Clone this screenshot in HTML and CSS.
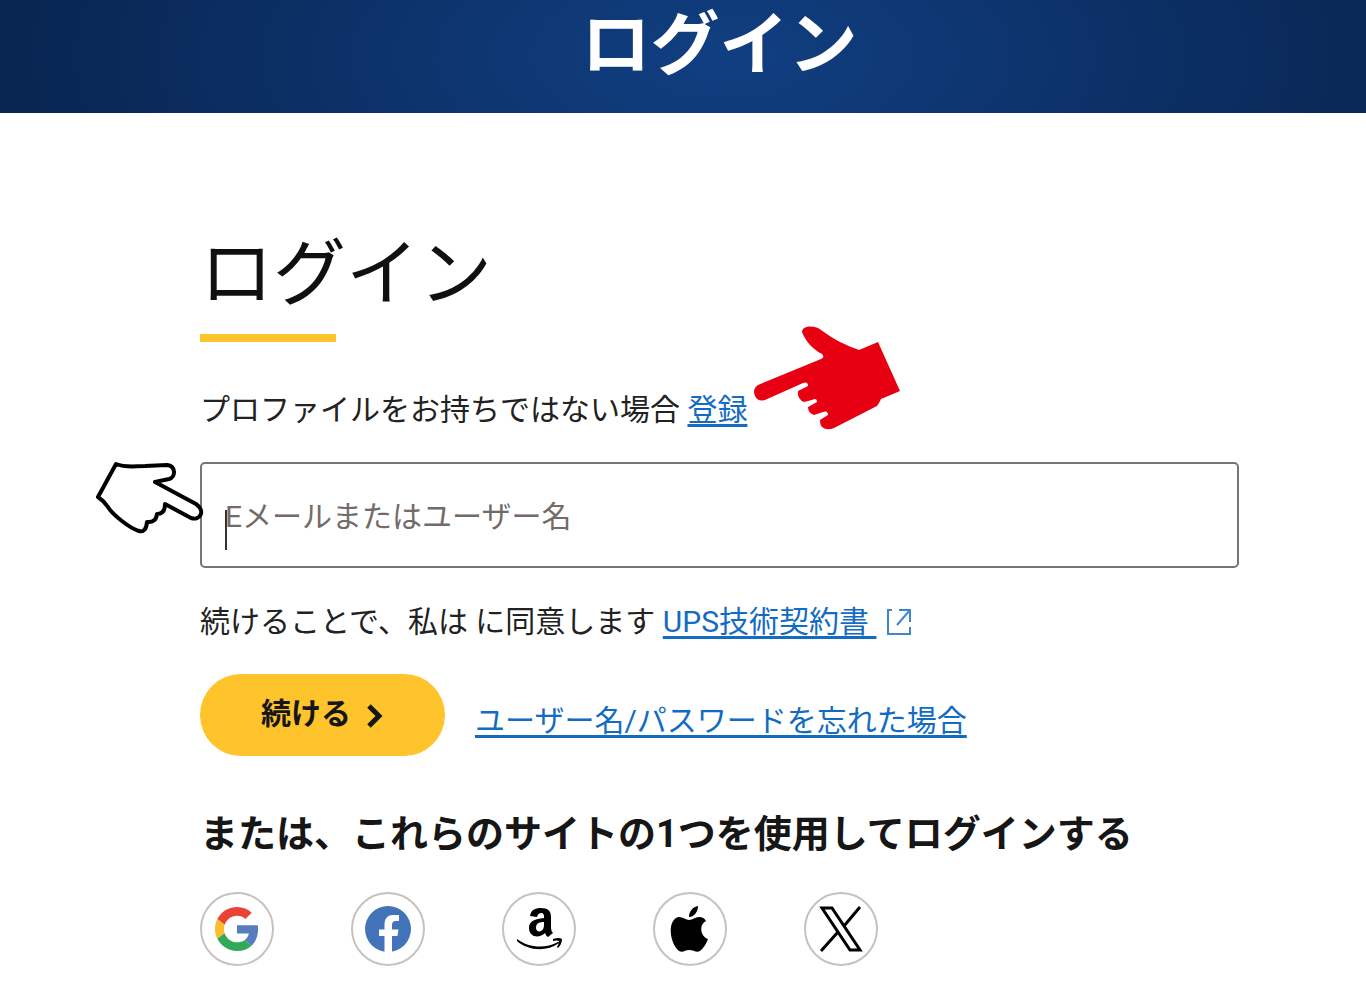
FILE: index.html
```html
<!DOCTYPE html>
<html lang="ja">
<head>
<meta charset="utf-8">
<meta name="viewport" content="width=device-width, initial-scale=1">
<title>ログイン</title>
<link rel="stylesheet" href="styles.css">
</head>
<body>
<header class="banner"><p class="banner-title">ログイン</p></header>
<main class="login">
  <h1 class="title">ログイン</h1>
  <p class="signup">プロファイルをお持ちではない場合 <span class="signup-anchor"><a href="#register">登録</a>
    <svg class="hand-red" width="146" height="104" viewBox="0 0 146 104" aria-hidden="true"><path fill="#e70012" d="M4 59L67 33Q71 31 68 28C58 23 51 14 48 6C48-1 62-1 67 4C81 14 91 19 105 24L124 16L146 65L127 73Q124 80 121 81L80 102Q73 105 68 101Q66 99 66 94L74 89Q74 84 69 86L60 89Q54 87 54 81L63 76Q63 71 58 74L50 76Q43 73 44 65L54 60Q54 55 49 57L11 74Q4 76 1 70Q-2 63 4 59Z"/></svg></span></p>
  <form class="form" action="#">
    <div class="field">
      <input class="input" id="user" type="text" placeholder="Eメールまたはユーザー名" aria-label="Eメールまたはユーザー名">
      <span class="caret"></span>
      <svg class="hand-outline" width="110" height="76" viewBox="0 0 110 76" aria-hidden="true"><path fill="#fff" stroke="#000" stroke-width="4" stroke-linejoin="round" d="M21 4C31 8 40 6 50 6L72 5C81 6 81 17 74 19L60 22L101 44C111 51 105 61 96 58L70 44Q70 54 62 54Q61 63 52 62Q51 73 44 71C34 68 17 54 13 47Q9 41 3 37Z"/></svg>
    </div>
    <p class="terms">続けることで、私は に同意します <a href="#terms">UPS技術契約書&nbsp;</a><svg class="external" width="26" height="28" viewBox="0 0 26 28" fill="none" stroke="#3f86cc" stroke-width="2" aria-hidden="true"><path d="M6 2H2V26H24V19M13 2H24V14M24 2L11 17"/></svg></p>
    <div class="actions">
      <button class="submit" type="submit">続ける<svg width="18" height="26" viewBox="0 0 18 26" fill="none" stroke="#161616" stroke-width="5" aria-hidden="true"><path d="M3 3L13 13L3 23"/></svg></button>
      <a class="forgot" href="#forgot">ユーザー名/パスワードを忘れた場合</a>
    </div>
  </form>
  <h2 class="subtitle">または、これらのサイトの1つを使用してログインする</h2>
  <div class="social">
    <button type="button" aria-label="Google"><svg width="44" height="44" viewBox="0 0 48 48"><path fill="#ea4335" d="M24 9.500c3.540 0 6.710 1.220 9.210 3.600l6.850-6.850C35.900 2.380 30.470 0 24 0 14.620 0 6.510 5.380 2.560 13.220l7.980 6.190C12.430 13.720 17.740 9.500 24 9.500z"/><path fill="#567ebf" d="M46.980 24.550c0-1.570-.15-3.090-.38-4.550H24v9.020h12.940c-.58 2.960-2.260 5.480-4.780 7.180l7.730 6c4.510-4.180 7.090-10.360 7.090-17.650z"/><path fill="#fbbc30" d="M10.530 28.590c-.48-1.450-.76-2.990-.76-4.590s.27-3.140.76-4.590l-7.980-6.190C.92 16.460 0 20.120 0 24c0 3.880.92 7.540 2.560 10.780l7.970-6.190z"/><path fill="#34a85a" d="M24 48c6.480 0 11.930-2.130 15.890-5.810l-7.730-6c-2.150 1.450-4.920 2.300-8.160 2.300-6.260 0-11.570-4.220-13.470-9.910l-7.980 6.190C6.510 42.620 14.620 48 24 48z"/></svg></button>
    <button type="button" aria-label="Facebook"><svg width="46" height="46" viewBox="0 0 46 46"><circle cx="23" cy="23" r="23" fill="#4373b8"/><path fill="#fff" d="M19.500 46V30H14V23.500H19.500V19C19.500 12 23 9 28 9H34V15H30.500Q27 15 27 19V23.500H33.500L32.500 30H27V46Z"/></svg></button>
    <button type="button" aria-label="Amazon"><svg width="46" height="44" viewBox="0 0 46 44"><path fill-rule="evenodd" d="M14 9C15 3 19 1 25 1C32 1 35 4 35 10V21Q35 24 37 26L32 30Q30 29 29 26C23 32 13 30 13 21C13 14 19 12 28 11V9C28 5 22 5 21 10ZM28 15C22 15 20 17 20 21C20 26 28 26 28 18Z"/><path d="M1 32C13 41 29 42 42 35Q44 34 43 36C31 45 12 44 1 34ZM37 32Q43 30 46 32Q46 37 42 41L41 40Q43 37 43 34Q41 33 37 34Z"/></svg></button>
    <button type="button" aria-label="Apple"><svg width="40" height="46" viewBox="0 0 40 46"><path d="M28 0C28 6 24 11 19 11C19 5 23 1 28 0ZM19 14C23 14 25 11 29 11Q34 11 36 15C28 19 31 31 38 33Q35 41 30 45C26 47 24 44 19 44C15 44 13 47 9 45C-1 37-3 13 9 11C13 11 16 14 19 14Z"/></svg></button>
    <button type="button" aria-label="X"><svg width="44" height="46" viewBox="0 0 44 46" fill="none" stroke="#000" stroke-width="3"><path d="M3 2H13L41 44H31ZM41 1L25 20M2 45L19 26"/></svg></button>
  </div>
</main>
</body>
</html>
```
FILE: styles.css
```css
* { box-sizing: border-box; }
body {
  margin: 0;
  background: #fff;
  color: #222;
  font: 400 30px/44px Roboto, "Noto Sans CJK JP", sans-serif;
}
h1, h2, p { margin: 0; }
a { color: #136cc2; text-decoration-thickness: 3px; text-underline-offset: 4px; }
svg { flex: none; }

.banner {
  padding: 0 127px 21px 200px;
  background: radial-gradient(ellipse 55% 300% at 53% 50%, #113f82, #08244f);
}
.banner-title {
  color: #fff;
  font-size: 69px;
  font-weight: 700;
  line-height: 92px;
  text-align: center;
}

.login { padding: 113px 127px 36px 200px; }
.title {
  color: #101010;
  font-size: 73px;
  font-weight: 400;
  line-height: 96px;
}
.title::after {
  content: "";
  display: block;
  width: 136px;
  height: 8px;
  margin-top: 12px;
  background: #ffc32b;
}

.signup { margin-top: 46px; }
.signup-anchor { position: relative; }
.hand-red { position: absolute; left: 67px; top: -66px; }

.field { position: relative; margin-top: 30px; }
.input {
  display: block;
  width: 100%;
  height: 106px;
  padding: 2px 23px 0;
  border: 2px solid #7b7371;
  border-radius: 5px;
  background: #fff;
  color: #222;
  font: inherit;
}
.input::placeholder { color: #736b69; opacity: 1; }
.caret {
  position: absolute;
  left: 25px;
  top: 48px;
  width: 2px;
  height: 40px;
  background: #333;
}
.hand-outline { position: absolute; left: -105px; top: -2px; }

.terms { margin-top: 32px; }
.external { margin-left: 10px; vertical-align: -4px; }

.actions { display: flex; align-items: center; gap: 30px; margin-top: 30px; }
.submit {
  display: flex;
  align-items: center;
  gap: 15px;
  height: 82px;
  padding: 0 61px 2px;
  border: 0;
  border-radius: 41px;
  background: #ffc32b;
  color: #161616;
  font: inherit;
  font-weight: 700;
}
.submit svg { margin-top: 4px; }
.forgot { margin-top: 12px; }

.subtitle {
  margin-top: 50px;
  color: #161616;
  font-size: 38px;
  font-weight: 700;
  line-height: 56px;
}
.social { display: flex; flex-wrap: wrap; gap: 77px; margin-top: 30px; }
.social button {
  display: flex;
  align-items: center;
  justify-content: center;
  width: 74px;
  height: 74px;
  padding: 0;
  border: 2px solid #c8c1bc;
  border-radius: 50%;
  background: #fff;
}
```
